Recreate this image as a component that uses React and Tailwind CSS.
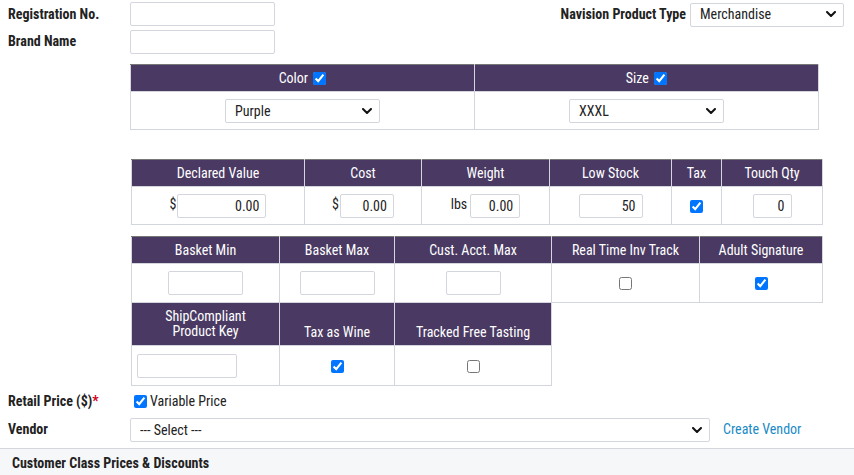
import React from "react";

const font = { fontFamily: "Roboto, 'Liberation Sans', sans-serif" };

function Chevron() {
  return (
    <svg viewBox="0 0 10 6" className="w-[10px] h-[6px] absolute right-[8px] top-1/2 -translate-y-1/2 pointer-events-none">
      <path d="M1 1l4 4 4-4" fill="none" stroke="#111" strokeWidth="2" strokeLinecap="round" strokeLinejoin="round" />
    </svg>
  );
}

function Select({ value, className }) {
  return (
    <div className={`relative inline-block ${className}`}>
      <select
        defaultValue={value}
        className="appearance-none w-full h-full border border-[#d3d6dc] rounded-[2px] bg-white pl-[9px] text-[14px] text-[#222] outline-none font-stretch-condensed"
      >
        <option>{value}</option>
      </select>
      <Chevron />
    </div>
  );
}

function TextInput({ value = "", className = "", right = false }) {
  return (
    <input
      type="text"
      defaultValue={value}
      className={`h-[24px] border border-[#d3d6dc] rounded-[2px] bg-white text-[14px] text-[#222] px-[6px] outline-none font-stretch-condensed ${right ? "text-right" : ""} ${className}`}
    />
  );
}

function Check({ checked }) {
  return <input type="checkbox" defaultChecked={checked} className="w-[13px] h-[13px] align-middle m-0" />;
}

const th = "bg-[#4a3a63] text-white font-normal text-[14px] border-x border-[#d3d6dc] border-t border-t-[#777] px-1 leading-[15px]";
const td = "border border-[#d3d6dc] text-center align-middle";

export default function App() {
  return (
    <div className="w-[854px] h-[475px] bg-white text-[#222] overflow-hidden font-stretch-condensed" style={font}>
      {/* Top fields */}
      <div className="flex items-center h-[27px] pt-[1px]">
        <div className="w-[130px] pl-[8px] font-bold text-[14px]">Registration No.</div>
        <TextInput className="w-[145px] h-[23px]" />
        <div className="flex-1 text-right pr-[4px] font-bold text-[14px]">Navision Product Type</div>
        <Select value="Merchandise" className="w-[154px] h-[24px] mr-[10px]" />
      </div>
      <div className="flex items-center h-[29px]">
        <div className="w-[130px] pl-[8px] font-bold text-[14px]">Brand Name</div>
        <TextInput className="w-[145px] h-[23px]" />
      </div>

      {/* Color / Size */}
      <table className="ml-[130px] mt-[8px] w-[689px] border-collapse table-fixed">
        <thead>
          <tr className="h-[27px]">
            <th className={th}>
              Color <span className="inline-block align-middle ml-[2px] -mt-[2px]"><Check checked /></span>
            </th>
            <th className={th}>
              Size <span className="inline-block align-middle ml-[2px] -mt-[2px]"><Check checked /></span>
            </th>
          </tr>
        </thead>
        <tbody>
          <tr className="h-[38px]">
            <td className={td}>
              <Select value="Purple" className="w-[155px] h-[24px] align-middle" />
            </td>
            <td className={td}>
              <Select value="XXXL" className="w-[155px] h-[24px] align-middle" />
            </td>
          </tr>
        </tbody>
      </table>

      {/* Value / Cost */}
      <table className="ml-[131px] mt-[29px] w-[691px] border-collapse table-fixed">
        <colgroup>
          <col className="w-[173px]" />
          <col className="w-[117px]" />
          <col className="w-[128px]" />
          <col className="w-[122px]" />
          <col className="w-[50px]" />
          <col className="w-[101px]" />
        </colgroup>
        <thead>
          <tr className="h-[27px]">
            <th className={th}>Declared Value</th>
            <th className={th}>Cost</th>
            <th className={th}>Weight</th>
            <th className={th}>Low Stock</th>
            <th className={th}>Tax</th>
            <th className={th}>Touch Qty</th>
          </tr>
        </thead>
        <tbody>
          <tr className="h-[38px] text-[14px]">
            <td className={td}>
              <span className="mr-[1px]">$</span>
              <TextInput value="0.00" right className="w-[89px] align-middle" />
            </td>
            <td className={td}>
              <span className="mr-[1px]">$</span>
              <TextInput value="0.00" right className="w-[54px] align-middle" />
            </td>
            <td className={td}>
              <span className="mr-[3px]">lbs</span>
              <TextInput value="0.00" right className="w-[50px] align-middle" />
            </td>
            <td className={td}>
              <TextInput value="50" right className="w-[64px] align-middle" />
            </td>
            <td className={td}>
              <Check checked />
            </td>
            <td className={td}>
              <TextInput value="0" right className="w-[39px] align-middle" />
            </td>
          </tr>
        </tbody>
      </table>

      {/* Basket table */}
      <table className="ml-[131px] mt-[11px] w-[691px] border-collapse table-fixed">
        <colgroup>
          <col className="w-[148px]" />
          <col className="w-[115px]" />
          <col className="w-[157px]" />
          <col className="w-[148px]" />
          <col className="w-[123px]" />
        </colgroup>
        <tbody>
          <tr className="h-[27px]">
            <th className={th}>Basket Min</th>
            <th className={th}>Basket Max</th>
            <th className={th}>Cust. Acct. Max</th>
            <th className={th}>Real Time Inv Track</th>
            <th className={th}>Adult Signature</th>
          </tr>
          <tr className="h-[39px]">
            <td className={td}>
              <TextInput className="w-[75px] align-middle" />
            </td>
            <td className={td}>
              <TextInput className="w-[75px] align-middle" />
            </td>
            <td className={td}>
              <TextInput className="w-[55px] align-middle" />
            </td>
            <td className={td}>
              <Check />
            </td>
            <td className={td}>
              <Check checked />
            </td>
          </tr>
          <tr className="h-[43px]">
            <th className={`${th} pt-[3px] pb-[4px]`}>
              ShipCompliant
              <br />
              Product Key
            </th>
            <th className={`${th} align-bottom pb-[5px]`}>Tax as Wine</th>
            <th className={`${th} align-bottom pb-[5px]`}>Tracked Free Tasting</th>
            <td className="border-t border-[#d3d6dc]"></td>
            <td className="border-t border-[#d3d6dc]"></td>
          </tr>
          <tr className="h-[40px]">
            <td className={`${td} text-left pl-[5px]`}>
              <TextInput className="w-[100px] align-middle" />
            </td>
            <td className={td}>
              <Check checked />
            </td>
            <td className={td}>
              <Check />
            </td>
            <td></td>
            <td></td>
          </tr>
        </tbody>
      </table>

      {/* Retail price */}
      <div className="flex items-center h-[30px]">
        <div className="w-[134px] pl-[8px] font-bold text-[14px]">
          Retail Price ($)<span className="text-[#d0021b]">*</span>
        </div>
        <label className="flex items-center gap-[3px] text-[14px]">
          <Check checked />
          Variable Price
        </label>
      </div>
      <div className="flex items-center h-[27px]">
        <div className="w-[130px] pl-[8px] font-bold text-[14px]">Vendor</div>
        <Select value="--- Select ---" className="w-[580px] h-[24px]" />
        <a className="ml-[13px] text-[14px] text-[#1a8ac6]">Create Vendor</a>
      </div>

      {/* Bottom section */}
      <div className="mt-[5px] border-t border-[#d3d6dc] bg-[#f6f7f9] h-[30px] flex items-center pl-[12px] font-bold text-[14px]">
        Customer Class Prices &amp; Discounts
      </div>
    </div>
  );
}
